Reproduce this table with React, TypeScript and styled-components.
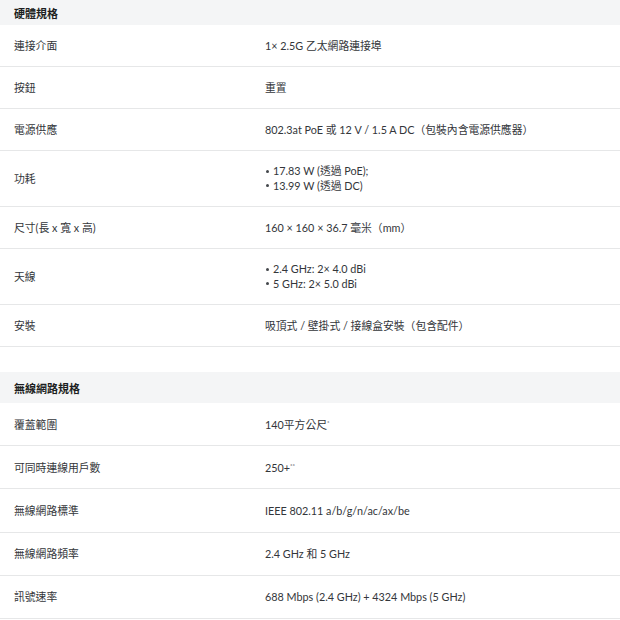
import React from 'react';
import styled, {createGlobalStyle} from 'styled-components';

const GlobalStyle = createGlobalStyle`
  body {
    margin: 0;
    background: #fff;
    font-family: "Lato", "Noto Sans CJK TC", sans-serif;
    color: #2a2d31;
  }
`

const Page = styled.div`
  width: 620px;
  height: 620px;
  overflow: hidden;
  display: flex;
  flex-direction: column;
  gap: 25px;
`

const Section = styled.section`
  display: flex;
  flex-direction: column;
`

const SectionTitle = styled.h3<{ height: number }>`
  margin: 0;
  height: ${props => props.height}px;
  display: flex;
  align-items: center;
  padding: 0 14px;
  background: #f4f5f6;
  font-size: 11px;
  font-weight: 700;
  color: #1d1f22;
`

const Row = styled.div<{ loose?: boolean }>`
  display: grid;
  grid-template-columns: 251px 1fr;
  align-items: center;
  padding: ${props => props.loose ? '13.6px' : '13px'} 14px;
  border-bottom: 1px solid #e6e7e8;
  font-size: 10.8px;
  line-height: 15px;
`

const Label = styled.div`
  color: #33363a;
`

const Value = styled.div`
  color: #33363a;
`

const Bullet = styled.div`
  line-height: 14.5px;
`

const Dot = styled.span`
  display: inline-block;
  width: 3px;
  height: 3px;
  margin: 0 4px 2px 1px;
  border-radius: 50%;
  background: #44474b;
  vertical-align: middle;
`

const Sup = styled.sup`
  font-size: 6px;
  line-height: 0;
  vertical-align: 4px;
`

type Spec = {
  label: string
  value: React.ReactNode | string[]
}

const hardwareSpecs: Spec[] = [
  {label: '連接介面', value: '1× 2.5G 乙太網路連接埠'},
  {label: '按鈕', value: '重置'},
  {label: '電源供應', value: '802.3at PoE 或 12 V / 1.5 A DC（包裝內含電源供應器）'},
  {label: '功耗', value: ['17.83 W (透過 PoE);', '13.99 W (透過 DC)']},
  {label: '尺寸(長 x 寬 x 高)', value: '160 × 160 × 36.7 毫米（mm）'},
  {label: '天線', value: ['2.4 GHz: 2× 4.0 dBi', '5 GHz: 2× 5.0 dBi']},
  {label: '安裝', value: '吸頂式 / 壁掛式 / 接線盒安裝（包含配件）'}
]

const wirelessSpecs: Spec[] = [
  {label: '覆蓋範圍', value: <>140平方公尺<Sup>*</Sup></>},
  {label: '可同時連線用戶數', value: <>250+<Sup>**</Sup></>},
  {label: '無線網路標準', value: 'IEEE 802.11 a/b/g/n/ac/ax/be'},
  {label: '無線網路頻率', value: '2.4 GHz 和 5 GHz'},
  {label: '訊號速率', value: '688 Mbps (2.4 GHz) + 4324 Mbps (5 GHz)'}
]

const SpecSection = ({title, specs, loose, headerHeight}: {
  title: string,
  specs: Spec[],
  loose?: boolean,
  headerHeight: number
}) => (
  <Section>
    <SectionTitle height={headerHeight}>{title}</SectionTitle>
    {specs.map(spec => (
      <Row key={spec.label} loose={loose}>
        <Label>{spec.label}</Label>
        <Value>
          {Array.isArray(spec.value)
            ? spec.value.map(item => <Bullet key={item}><Dot/>{item}</Bullet>)
            : spec.value}
        </Value>
      </Row>
    ))}
  </Section>
)

export default function App() {
  return (
    <>
      <GlobalStyle/>
      <Page>
        <SpecSection title="硬體規格" specs={hardwareSpecs} headerHeight={25}/>
        <SpecSection title="無線網路規格" specs={wirelessSpecs} headerHeight={31} loose/>
      </Page>
    </>
  )
}
